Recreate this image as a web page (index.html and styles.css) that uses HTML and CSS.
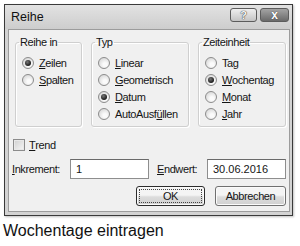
FILE: index.html
```html
<html>
	<head>
		<title>Reihe</title>
		<link rel="stylesheet" href="styles.css">
	</head>
	<body>
		<div class="dialog">
			<div class="titlebar">
				<span class="title">Reihe</span>
				<div class="capbtns">
					<span class="capbtn help">?</span>
					<span class="capbtn close">x</span>
				</div>
			</div>
			<div class="client">
				<div class="groups">
					<fieldset class="group">
						<legend>Reihe in</legend>
						<div class="opt"><span class="radio on"></span><u>Z</u>eilen</div>
						<div class="opt"><span class="radio"></span><u>S</u>palten</div>
					</fieldset>
					<fieldset class="group">
						<legend>Typ</legend>
						<div class="opt"><span class="radio"></span><u>L</u>inear</div>
						<div class="opt"><span class="radio"></span><u>G</u>eometrisch</div>
						<div class="opt"><span class="radio on"></span><u>D</u>atum</div>
						<div class="opt"><span class="radio"></span>AutoAusf<u>ü</u>llen</div>
					</fieldset>
					<fieldset class="group">
						<legend>Zeiteinheit</legend>
						<div class="opt"><span class="radio"></span>Ta<u>g</u></div>
						<div class="opt"><span class="radio on"></span><u>W</u>ochentag</div>
						<div class="opt"><span class="radio"></span><u>M</u>onat</div>
						<div class="opt"><span class="radio"></span><u>J</u>ahr</div>
					</fieldset>
				</div>
				<div class="opt trend"><span class="check"></span><u>T</u>rend</div>
				<div class="fields">
					<span class="lbl"><u>I</u>nkrement:</span>
					<span class="field">1</span>
					<span class="lbl lbl-end"><u>E</u>ndwert:</span>
					<span class="field">30.06.2016</span>
				</div>
				<div class="buttons">
					<span class="btn default"><span class="focus">OK</span></span>
					<span class="btn cancel">Abbrechen</span>
				</div>
			</div>
		</div>
		<p class="caption">Wochentage eintragen</p>
	</body>
</html>
```

FILE: styles.css
```css
body
{
	margin:0;
	background:white;
	font-family:"Liberation Sans", Arial, sans-serif;
}
.dialog
{
	box-sizing:border-box;
	width:289px;
	height:212px;
	margin:4px 0 0 4px;
	padding:0 2px 3px 3px;
	border:1px solid #3a3a3a;
	background:#d3d3d3;
	box-shadow:1px 1px 2px rgba(0,0,0,0.25);
	display:flex;
	flex-direction:column;
	font-size:11px;
	letter-spacing:-0.4px;
	color:#151515;
}
.titlebar
{
	height:24px;
	margin:0 -2px 0 -3px;
	padding:0 3px 0 6px;
	display:flex;
	align-items:center;
	justify-content:space-between;
	background:linear-gradient(to bottom, #e2e2e2, #cdcdcd);
}
.title
{
	font-size:12.5px;
	letter-spacing:0;
	color:#111;
}
.capbtns
{
	display:flex;
	gap:3px;
	align-self:flex-start;
	margin-top:3px;
}
.capbtn
{
	box-sizing:border-box;
	height:14px;
	border:1px solid #5c5c5c;
	border-radius:3px;
	display:flex;
	align-items:center;
	justify-content:center;
	font-weight:bold;
	letter-spacing:0;
	line-height:12px;
}
.help
{
	width:27px;
	background:linear-gradient(to bottom, #efefef, #c4c4c4);
	color:#f6f6f6;
	font-size:11px;
	text-shadow:0 0 1px #333, 0 0 1px #333;
}
.close
{
	width:29px;
	background:linear-gradient(to bottom, #a4a4a4, #6a6a6a);
	color:white;
	font-size:12px;
	text-shadow:0 0 1px #222;
}
.client
{
	flex:1;
	border:1px solid #9c9c9c;
	background:#f0f0f0;
	padding:6px 3px 0 3px;
	display:flex;
	flex-direction:column;
}
.groups
{
	display:grid;
	grid-template-columns:67px 98px 88px;
	column-gap:9px;
	margin-left:3px;
}
.group
{
	margin:0;
	padding:6px 4px 4px 6px;
	min-width:0;
	border:1px solid #cfcfcf;
	border-radius:3px;
	box-shadow:inset 1px 1px 0 white, 1px 1px 0 white;
}
.group legend
{
	padding:0 1px;
	margin-left:-3px;
	line-height:12px;
	white-space:nowrap;
}
.opt
{
	height:17px;
	display:flex;
	align-items:center;
	white-space:nowrap;
}
.radio
{
	box-sizing:border-box;
	width:12px;
	height:12px;
	margin-right:5px;
	flex:none;
	border-radius:50%;
	border:1px solid #8c8c8c;
	background:radial-gradient(circle at 60% 65%, #fbfbfb 20%, #d2d2d2 90%);
	display:flex;
	align-items:center;
	justify-content:center;
}
.radio.on::after
{
	content:"";
	width:6px;
	height:6px;
	border-radius:50%;
	background:radial-gradient(circle at 40% 35%, #777, #1a1a1a 70%);
}
.trend
{
	margin:9px 0 0 1px;
}
.check
{
	box-sizing:border-box;
	width:12px;
	height:12px;
	margin-right:4px;
	border:1px solid #8c8c8c;
	background:linear-gradient(135deg, #cfcfcf, #f7f7f7);
	box-shadow:inset 0 0 0 1px #e8e8e8;
}
.fields
{
	display:flex;
	align-items:center;
	margin-top:6px;
}
.lbl
{
	width:58px;
}
.lbl-end
{
	width:50px;
	margin-left:8px;
}
.field
{
	box-sizing:border-box;
	width:79px;
	height:20px;
	padding:0 5px;
	border:1px solid #8e8e8e;
	border-top-color:#6a6a6a;
	background:white;
	display:flex;
	align-items:center;
	letter-spacing:0;
}
.buttons
{
	display:flex;
	justify-content:flex-end;
	gap:10px;
	margin-top:7px;
}
.btn
{
	box-sizing:border-box;
	height:20px;
	border:1px solid #707070;
	border-radius:3px;
	background:linear-gradient(to bottom, #f4f4f4 45%, #dcdcdc 55%, #d0d0d0);
	display:flex;
	align-items:center;
	justify-content:center;
	box-shadow:inset 0 0 0 1px #fbfbfb;
}
.default
{
	width:69px;
	border-color:#2c2c2c;
	padding:2px;
}
.focus
{
	flex:1;
	align-self:stretch;
	border:1px dotted #444;
	display:flex;
	align-items:center;
	justify-content:center;
}
.cancel
{
	width:71px;
}
.caption
{
	margin:6px 0 0 3px;
	font-size:16px;
	line-height:18px;
	color:#111;
}
```
